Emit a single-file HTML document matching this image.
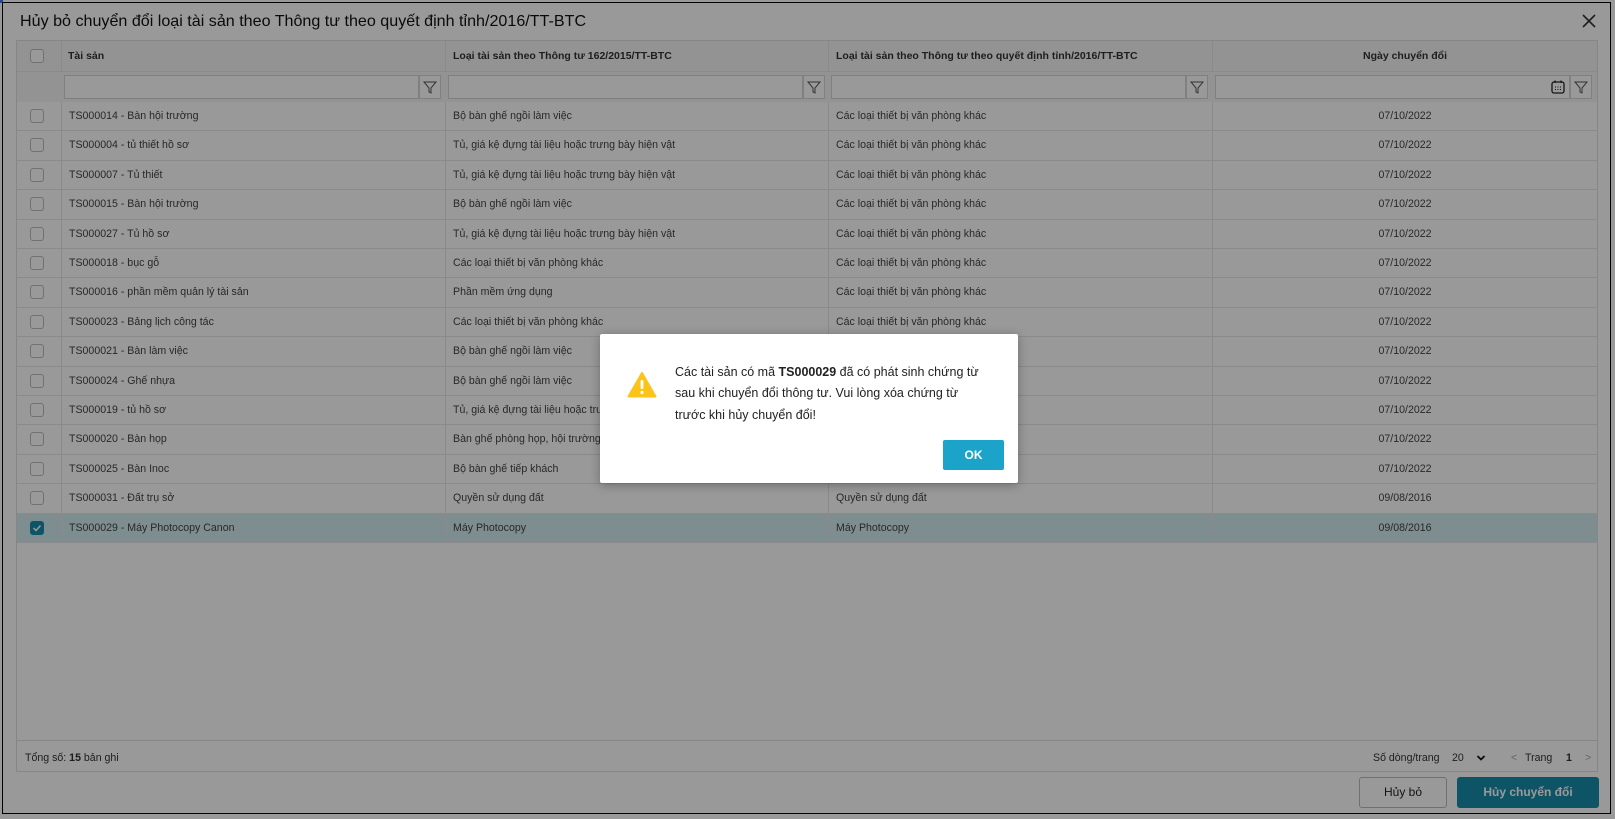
<!DOCTYPE html>
<html><head><meta charset="utf-8">
<style>
*{box-sizing:border-box;margin:0;padding:0}
body{width:1615px;height:819px;position:relative;overflow:hidden;background:#fff;font-family:"Liberation Sans",sans-serif;color:#212121}
.abs{position:absolute}
#dlg{left:2px;top:2px;width:1609px;height:812px;background:#fff;border:1px solid #000}
.title{left:20px;top:12px;font-size:16.1px;color:#111;white-space:nowrap}
.close{left:1580px;top:12px;width:18px;height:18px}
.grid{left:16px;top:40px;width:1582px;height:732px;border:1px solid #e0e0e0}
.hdr{left:0;top:0;width:1580px;height:31px;background:#f5f5f5;border-bottom:1px solid #e6e6e6}
.flt{left:0;top:31px;width:1580px;height:30px;background:#f5f5f5}
.cell{position:absolute;font-size:10.6px;white-space:nowrap;line-height:29px}
.hcell{font-weight:bold;font-size:10.5px;color:#333;line-height:30px}
.vline{position:absolute;top:0;width:1px;background:#e6e6e6}
.row{position:absolute;left:0;width:1580px;height:29.4px;border-bottom:1px solid #e6e6e6;background:#fff}
.cb{position:absolute;left:13px;width:14px;height:14px;border:1px solid #bdbdbd;border-radius:3px;background:#fff}
.inp{position:absolute;top:3px;height:24px;border:1px solid #d6d6d6;background:#fff}
.fbtn{position:absolute;top:3px;width:22px;height:24px;border:1px solid #d6d6d6;background:#fff}
.ov{left:0;top:0;width:1615px;height:819px;background:rgba(0,0,0,0.4)}
</style></head><body>
<div class="abs" style="left:0;top:0;width:3px;height:3px;background:#2f80ed"></div>
<div id="dlg" class="abs"></div>
<div class="abs title">Hủy bỏ chuyển đổi loại tài sản theo Thông tư theo quyết định tỉnh/2016/TT-BTC</div>
<svg class="abs close" viewBox="0 0 18 18"><path d="M3 3L15 15M15 3L3 15" stroke="#333" stroke-width="1.6"/></svg>

<div class="abs grid">
 <div class="abs hdr">
  <div class="cb" style="top:8px"></div>
  <div class="cell hcell" style="left:51px">Tài sản</div>
  <div class="cell hcell" style="left:436px">Loại tài sản theo Thông tư 162/2015/TT-BTC</div>
  <div class="cell hcell" style="left:819px">Loại tài sản theo Thông tư theo quyết định tỉnh/2016/TT-BTC</div>
  <div class="cell hcell" style="left:1196px;width:384px;text-align:center">Ngày chuyển đổi</div>
 </div>
 <div class="abs flt">
  <div class="inp" style="left:47px;width:355px"></div><div class="fbtn" style="left:402px"><svg width="20" height="22" viewBox="0 0 20 22"><path d="M4 6H16L11 12V17L9 16V12Z" fill="none" stroke="#555" stroke-width="1"/></svg></div>
  <div class="inp" style="left:431px;width:355px"></div><div class="fbtn" style="left:786px"><svg width="20" height="22" viewBox="0 0 20 22"><path d="M4 6H16L11 12V17L9 16V12Z" fill="none" stroke="#555" stroke-width="1"/></svg></div>
  <div class="inp" style="left:814px;width:355px"></div><div class="fbtn" style="left:1169px"><svg width="20" height="22" viewBox="0 0 20 22"><path d="M4 6H16L11 12V17L9 16V12Z" fill="none" stroke="#555" stroke-width="1"/></svg></div>
  <div class="inp" style="left:1198px;width:355px"></div>
  <svg style="position:absolute;left:1533px;top:7px" width="16" height="16" viewBox="0 0 16 16"><rect x="2" y="3" width="12" height="11" rx="2" fill="none" stroke="#222" stroke-width="1.3"/><path d="M5 1.5V4M11 1.5V4" stroke="#222" stroke-width="1.3"/><path d="M5 8h1M7.5 8h1M10 8h1M5 10.5h1M7.5 10.5h1M10 10.5h1" stroke="#222"/></svg>
  <div class="fbtn" style="left:1553px"><svg width="20" height="22" viewBox="0 0 20 22"><path d="M4 6H16L11 12V17L9 16V12Z" fill="none" stroke="#555" stroke-width="1"/></svg></div>
 </div>
 <div id="rows"></div>
 <div class="vline" style="left:44px;height:31px"></div>
 <div class="vline" style="left:428px;height:31px"></div>
 <div class="vline" style="left:811px;height:31px"></div>
 <div class="vline" style="left:1195px;height:31px"></div>
 <div class="abs" style="left:0;top:699px;width:1580px;height:1px;background:#e0e0e0"></div>
 <div class="cell" style="left:8px;top:703px;line-height:28px;color:#333">Tổng số: <b>15</b> bản ghi</div>
 <div class="cell" style="left:1356px;top:703px;line-height:28px;color:#333">Số dòng/trang</div>
 <div class="cell" style="left:1435px;top:703px;line-height:28px;color:#333">20</div>
 <svg style="position:absolute;left:1459px;top:713px" width="10" height="8" viewBox="0 0 10 8"><path d="M1.5 2L5 5.5L8.5 2" fill="none" stroke="#111" stroke-width="1.8"/></svg>
 <div class="cell" style="left:1494px;top:703px;line-height:28px;color:#aaa">&lt;</div>
 <div class="cell" style="left:1508px;top:703px;line-height:28px;color:#333">Trang</div>
 <div class="cell" style="left:1549px;top:703px;line-height:28px;color:#333;font-weight:bold">1</div>
 <div class="cell" style="left:1568px;top:703px;line-height:28px;color:#aaa">&gt;</div>
</div>

<div class="abs" style="left:1359px;top:777px;width:88px;height:31px;border:1px solid #bbb;border-radius:3px;background:#fff;font-size:12px;text-align:center;line-height:29px;color:#222">Hủy bỏ</div>
<div class="abs" style="left:1457px;top:777px;width:142px;height:31px;border-radius:3px;background:#178eaa;font-size:12px;text-align:center;line-height:31px;color:#fff;font-weight:bold">Hủy chuyển đổi</div>

<div class="abs ov"></div>

<div class="abs" style="left:600px;top:334px;width:418px;height:149px;background:#fff;border-radius:2px;box-shadow:0 2px 10px rgba(0,0,0,.3)">
 <svg style="position:absolute;left:27px;top:37px" width="30" height="27" viewBox="0 0 30 27"><path d="M15 2L28.5 25.5H1.5Z" fill="#fcc419" stroke="#fcc419" stroke-width="2" stroke-linejoin="round"/><rect x="13.6" y="9" width="2.8" height="9" rx="1" fill="#fff"/><circle cx="15" cy="21.5" r="1.6" fill="#fff"/></svg>
 <div style="position:absolute;left:75px;top:28px;width:310px;font-size:12.5px;line-height:21.3px;color:#222">Các tài sản có mã <b>TS000029</b> đã có phát sinh chứng từ sau khi chuyển đổi thông tư. Vui lòng xóa chứng từ trước khi hủy chuyển đổi!</div>
 <div style="position:absolute;left:343px;top:106px;width:61px;height:30px;background:#1ba3c9;border-radius:2px;color:#fff;font-weight:bold;font-size:12px;text-align:center;line-height:30px">OK</div>
</div>

<script>
var d=[["TS000014 - Bàn hội trường","Bộ bàn ghế ngồi làm việc","Các loại thiết bị văn phòng khác","07/10/2022"],
["TS000004 - tủ thiết hồ sơ","Tủ, giá kệ đựng tài liệu hoặc trưng bày hiện vật","Các loại thiết bị văn phòng khác","07/10/2022"],
["TS000007 - Tủ thiết","Tủ, giá kệ đựng tài liệu hoặc trưng bày hiện vật","Các loại thiết bị văn phòng khác","07/10/2022"],
["TS000015 - Bàn hội trường","Bộ bàn ghế ngồi làm việc","Các loại thiết bị văn phòng khác","07/10/2022"],
["TS000027 - Tủ hồ sơ","Tủ, giá kệ đựng tài liệu hoặc trưng bày hiện vật","Các loại thiết bị văn phòng khác","07/10/2022"],
["TS000018 - bục gỗ","Các loại thiết bị văn phòng khác","Các loại thiết bị văn phòng khác","07/10/2022"],
["TS000016 - phần mềm quản lý tài sản","Phần mềm ứng dụng","Các loại thiết bị văn phòng khác","07/10/2022"],
["TS000023 - Bảng lịch công tác","Các loại thiết bị văn phòng khác","Các loại thiết bị văn phòng khác","07/10/2022"],
["TS000021 - Bàn làm việc","Bộ bàn ghế ngồi làm việc","Các loại thiết bị văn phòng khác","07/10/2022"],
["TS000024 - Ghế nhựa","Bộ bàn ghế ngồi làm việc","Các loại thiết bị văn phòng khác","07/10/2022"],
["TS000019 - tủ hồ sơ","Tủ, giá kệ đựng tài liệu hoặc trưng bày hiện vật","Các loại thiết bị văn phòng khác","07/10/2022"],
["TS000020 - Bàn họp","Bàn ghế phòng họp, hội trường","Các loại thiết bị văn phòng khác","07/10/2022"],
["TS000025 - Bàn Inoc","Bộ bàn ghế tiếp khách","Các loại thiết bị văn phòng khác","07/10/2022"],
["TS000031 - Đất trụ sở","Quyền sử dụng đất","Quyền sử dụng đất","09/08/2016"],
["TS000029 - Máy Photocopy Canon","Máy Photocopy","Máy Photocopy","09/08/2016"]];
var h="";
d.forEach(function(r,i){
 var t=(61+i*29.4).toFixed(1), sel=i==14;
 h+='<div class="row" style="top:'+t+'px;'+(sel?'background:#d3ecf0':'')+'">'+
 (sel?'<div class="cb" style="top:7px;background:#178eaa;border-color:#178eaa"><svg width="12" height="12" viewBox="0 0 12 12" style="position:absolute;left:0;top:0"><path d="M2.5 6L5 8.5L9.5 3.5" fill="none" stroke="#fff" stroke-width="1.5"/></svg></div>':'<div class="cb" style="top:7px"></div>')+
 '<div class="vline" style="left:44px;height:29px"></div><div class="vline" style="left:428px;height:29px"></div><div class="vline" style="left:811px;height:29px"></div><div class="vline" style="left:1195px;height:29px"></div>'+
 '<div class="cell" style="left:52px;color:#444">'+r[0]+'</div><div class="cell" style="left:436px;color:#444">'+r[1]+'</div><div class="cell" style="left:819px;color:#444">'+r[2]+'</div><div class="cell" style="left:1196px;width:384px;text-align:center;color:#444">'+r[3]+'</div></div>';
});
document.getElementById("rows").innerHTML=h;
</script>
</body></html>
